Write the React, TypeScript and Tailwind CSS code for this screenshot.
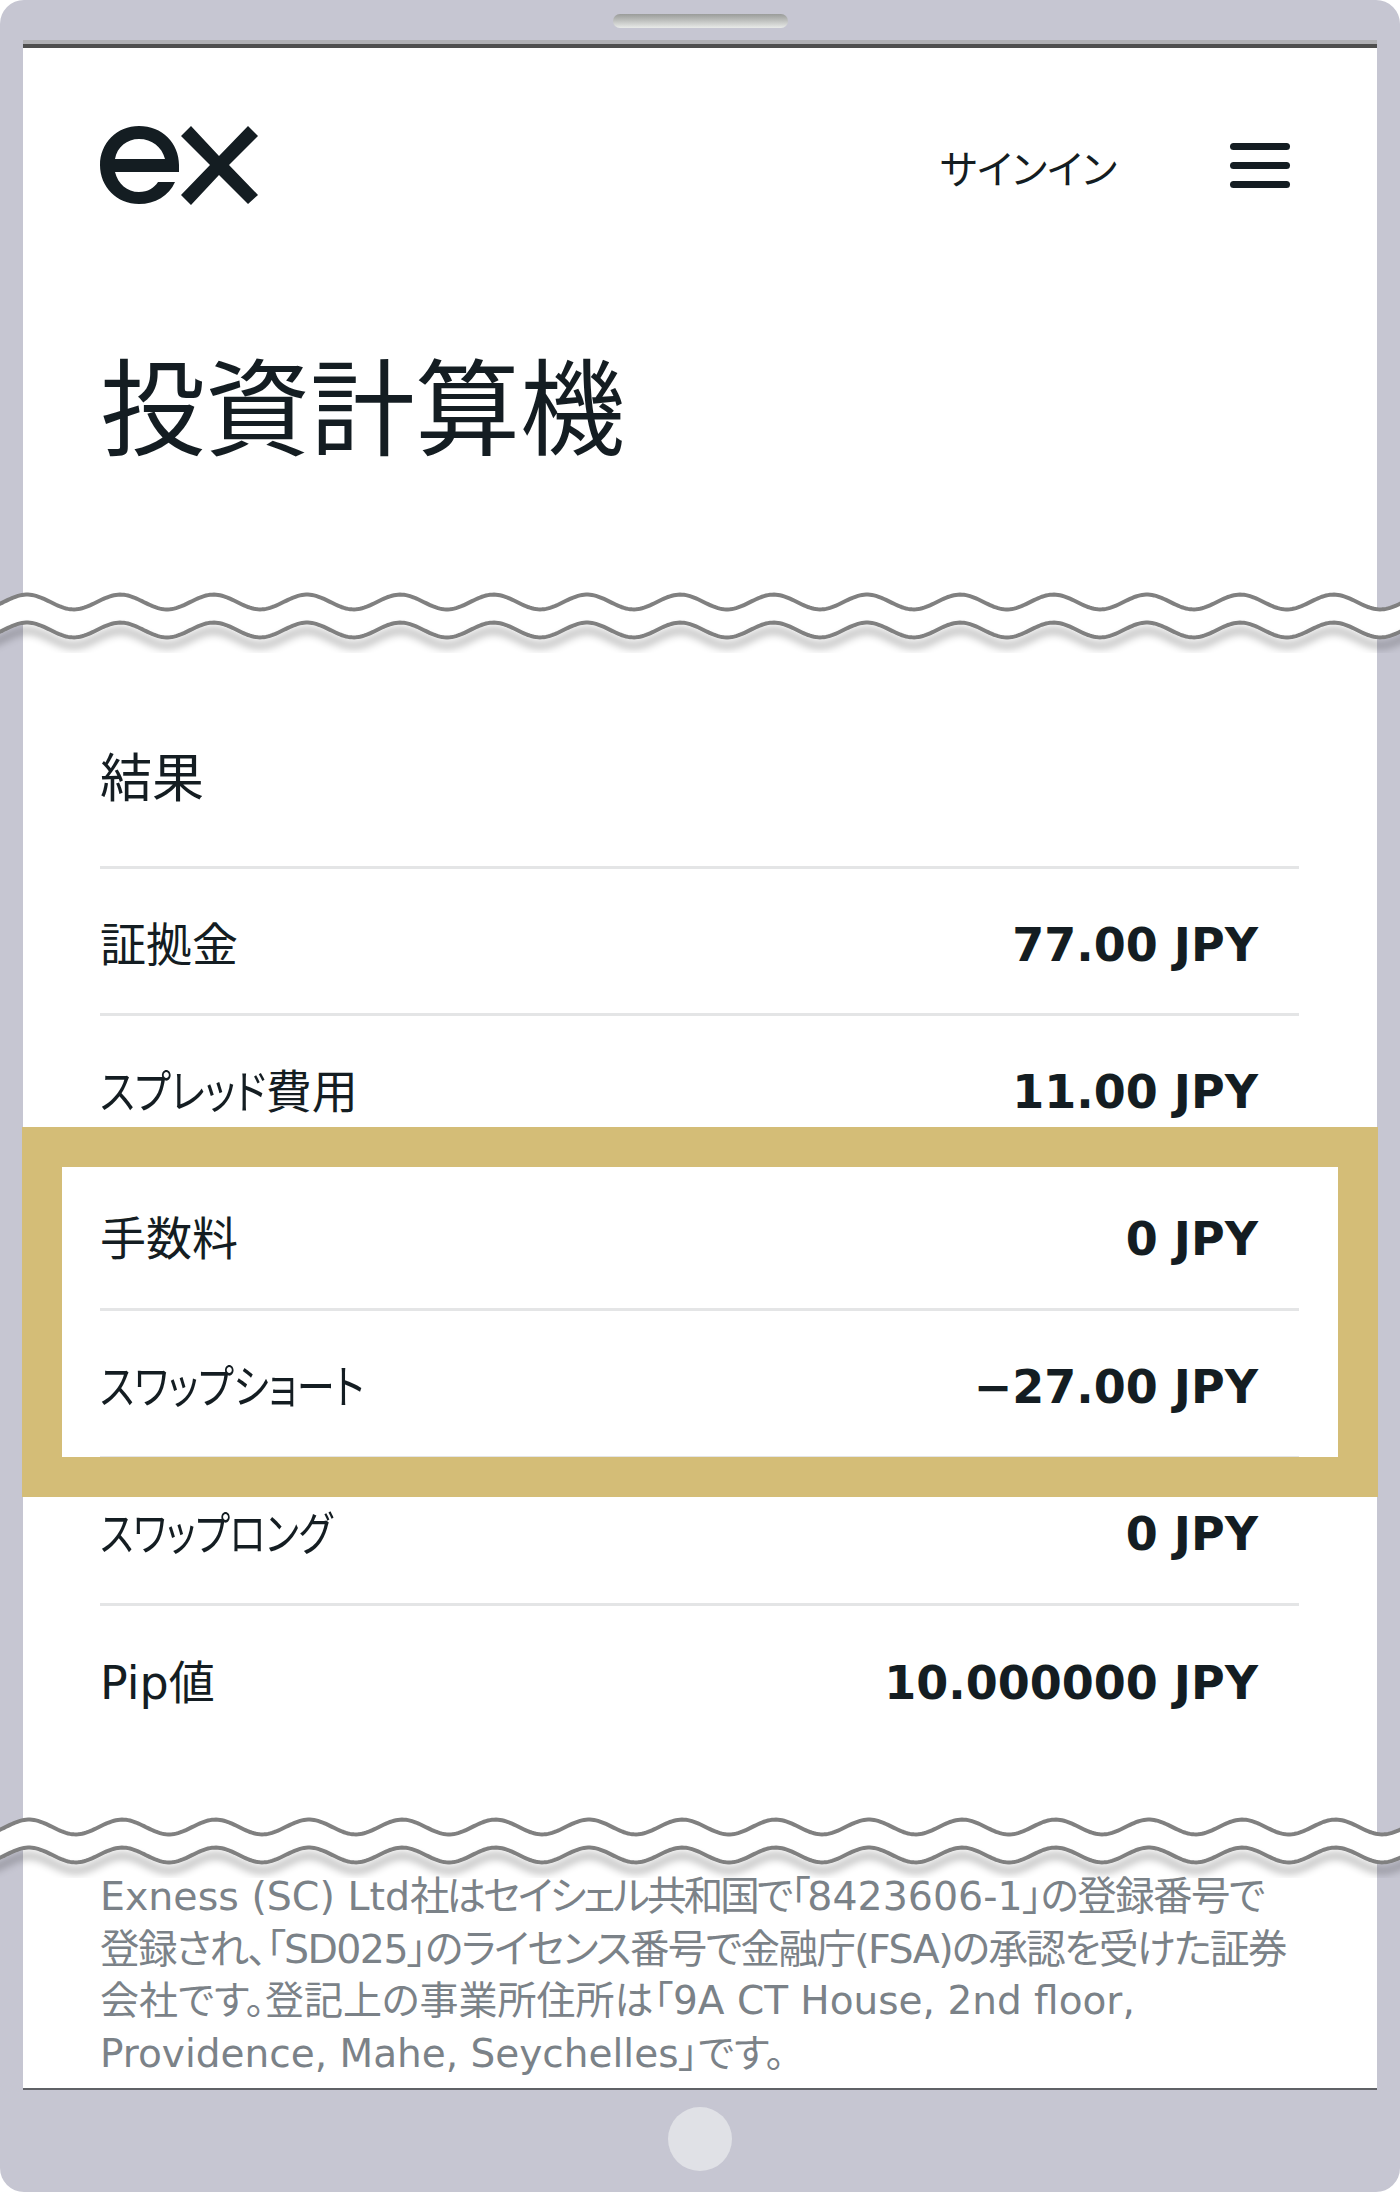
import type { ReactNode } from 'react';

const kana = 'inline-block origin-left';

const rows: { label: ReactNode; key: string; value: string }[] = [
  {
    key: 'spread',
    label: (
      <>
        <span className={`${kana} scale-x-[0.843] mr-[-31px]`}>スプレッド</span>費用
      </>
    ),
    value: '11.00 JPY',
  },
  { key: 'fee', label: '手数料', value: '0 JPY' },
  { key: 'short', label: <span className={`${kana} scale-x-[0.83]`}>スワップショート</span>, value: '−27.00 JPY' },
  { key: 'long', label: <span className={`${kana} scale-x-[0.806]`}>スワップロング</span>, value: '0 JPY' },
];

// sine wave sampled as points, x0 = first crest, mid = centre of the stroke
function wave(x0: number, mid: number) {
  const pts: string[] = [];
  for (let x = -10; x <= 1410; x += 2) {
    const y = mid - 7.4 * Math.cos(((x - x0) * 2 * Math.PI) / 93.33);
    pts.push(`${x} ${y.toFixed(2)}`);
  }
  return pts;
}

function Tear({ id, crest }: { id: string; crest: number }) {
  const top = wave(crest, 17);
  const bottom = wave(crest, 45);
  return (
    <svg width="1400" height="60" viewBox="0 0 1400 60" className="block -mx-[23px] overflow-visible relative z-10">
      <defs>
        <filter id={id} x="-5%" y="-50%" width="110%" height="250%">
          <feDropShadow dx="0" dy="8" stdDeviation="4" floodColor="#000" floodOpacity="0.45" />
        </filter>
      </defs>
      <path d={`M${top.join('L')}L${[...bottom].reverse().join('L')}Z`} fill="#fff" />
      <path d={`M${top.join('L')}`} fill="none" stroke="#808080" strokeWidth="4" />
      <path d={`M${bottom.join('L')}`} fill="none" stroke="#808080" strokeWidth="4" filter={`url(#${id})`} />
    </svg>
  );
}

function Row({ label, value }: { label: ReactNode; value: string }) {
  return (
    <div className="h-[147.4px] ml-[77px] mr-[78px] pt-[7px] border-b-[3px] border-[#e4e5e6] flex items-center justify-between pr-[41px]">
      <span className="text-[46px] leading-none [font-feature-settings:'palt']">{label}</span>
      <span className="text-[46px] leading-none font-bold">{value}</span>
    </div>
  );
}

export default function App() {
  return (
    <div className="w-[1400px] h-[2192px] bg-[#c6c6d2] rounded-[24px] px-[23px] overflow-hidden text-[#141d22] font-['DejaVu_Sans','Noto_Sans_CJK_JP',sans-serif]">
      <div className="h-[40px] pt-[14px] flex justify-center">
        <div className="w-[175px] h-[14px] rounded-[7px] bg-gradient-to-b from-[#9a9c9a] to-[#e9ebe9]" />
      </div>

      <div className="bg-white h-[2050px] border-b-2 border-[#5f6166]">
        <div className="h-1 bg-[#b0b0b4]" />
        <div className="h-1 bg-[#4f4f4f]" />

        <header className="flex items-center h-[78px] mt-[78px] pl-[77px]">
          <svg width="158" height="79" viewBox="0 0 158 79" fill="#141d22">
            <path fillRule="evenodd" d="M79 46H15C18 58 27 66 39 66C48 66 54 62 58 56H75C69 70 55 78 39 78C17 78 0 61 0 39C0 17 17 0 39 0C62 0 79 17 79 39ZM15 33H65C62 21 52 13 39 13C27 13 17 21 15 33Z" />
            <path d="M91 0L81 10L110 39L81 69L91 79L119 49L148 78L158 69L129 39L158 10L148 0L119 30Z" />
          </svg>
          <span className="ml-[682px] mt-[12px] text-[39.5px] leading-none [font-feature-settings:'palt']">サインイン</span>
          <div className="ml-[113px] flex flex-col gap-[12px]">
            <div className="w-[60px] h-[7px] rounded-full bg-[#141d22]" />
            <div className="w-[60px] h-[7px] rounded-full bg-[#141d22]" />
            <div className="w-[60px] h-[7px] rounded-full bg-[#141d22]" />
          </div>
        </header>

        <h1 className="mt-[142px] ml-[77px] h-[130px] text-[105px] leading-[130px] font-normal">投資計算機</h1>

        <div className="mt-[109px]">
          <Tear id="tear-a" crest={27} />
        </div>

        <div className="h-[224px] ml-[77px] mr-[78px] pt-[47px] border-b-[3px] border-[#e4e5e6] flex items-center">
          <h2 className="text-[52px] leading-none font-normal">結果</h2>
        </div>

        <div className="relative">
          <Row label="証拠金" value="77.00 JPY" />
          {rows.map((r) => (
            <Row key={r.key} label={r.label} value={r.value} />
          ))}
          <div className="h-[147px] ml-[77px] mr-[78px] pt-[7px] flex items-center justify-between pr-[41px]">
            <span className="text-[46px] leading-none">Pip値</span>
            <span className="text-[46px] leading-none font-bold">10.000000 JPY</span>
          </div>
          {/* callout frame lying over the rows */}
          <div className="absolute -left-px -right-px top-[258px] h-[370px] border-[40px] border-[#d4bd77]" />
        </div>

        <div className="mt-[57px]">
          <Tear id="tear-b" crest={29} />
        </div>

        <div className="ml-[77px] text-[39.5px] leading-[52.6px] text-[#7b8288] whitespace-nowrap [font-feature-settings:'palt']">
          <p>
            Exness (SC) Ltd<span className="tracking-[-2.9px]">社はセイシェル共和国で「</span>8423606-1<span className="tracking-[-1.6px]">」の登録番号で</span>
          </p>
          <p className="tracking-[-1.6px]">登録され、「SD025」のライセンス番号で金融庁(FSA)の承認を受けた証券</p>
          <p className="text-[39px]">会社です。登記上の事業所住所は「9A CT House, 2nd floor,</p>
          <p className="text-[39px]">Providence, Mahe, Seychelles」です。</p>
        </div>
      </div>

      <div className="pt-[17px] flex justify-center">
        <div className="w-[64px] h-[64px] rounded-full bg-[#e0e1e6]" />
      </div>
    </div>
  );
}
